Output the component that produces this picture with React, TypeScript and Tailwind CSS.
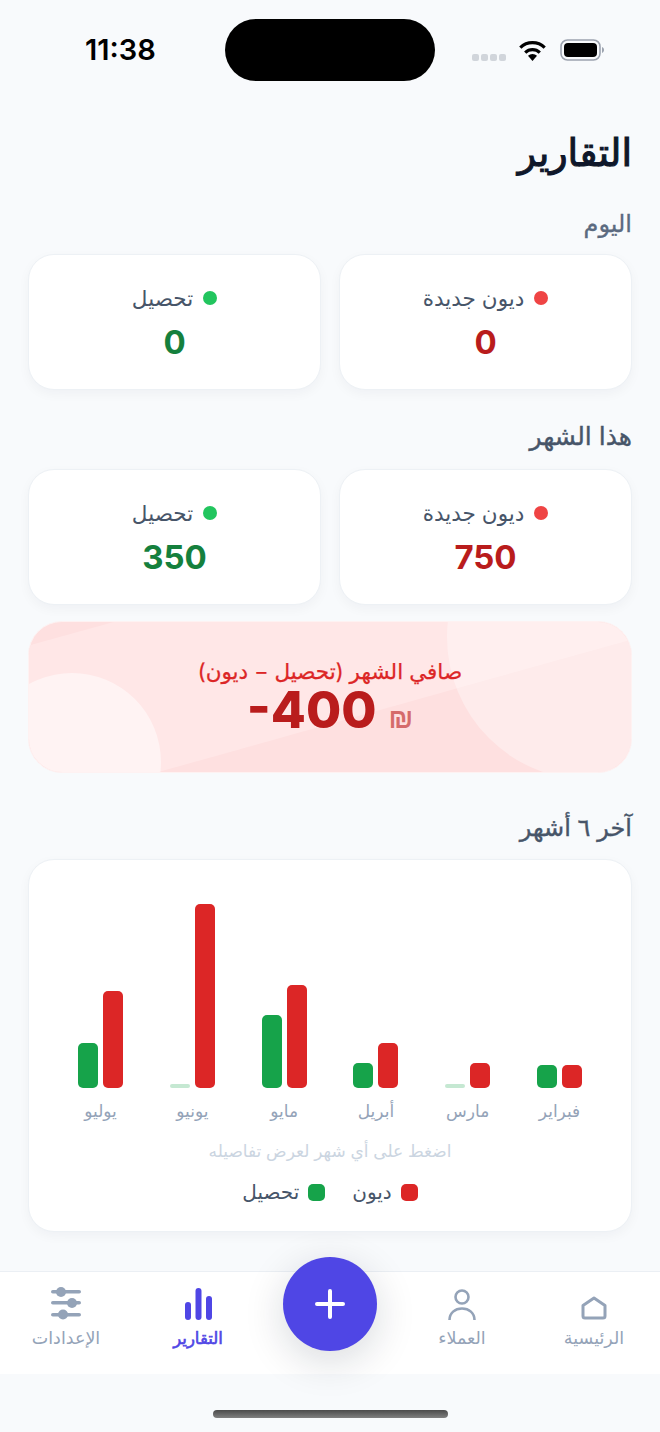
import React from "react";

const FONT = { fontFamily: "Inter, 'Noto Sans', 'DejaVu Sans', sans-serif" };

function Stat({ label, value, dot, color }: { label: string; value: string; dot: string; color: string }) {
  return (
    <div className="flex h-[136px] flex-col items-center rounded-[26px] border border-[#edf1f5] bg-white pt-[29px] shadow-[0_4px_12px_rgba(15,23,42,0.04)]">
      <div className="flex items-center gap-[10px] text-[21.5px] leading-[28px] text-[#475569]">
        <span className={`h-[14px] w-[14px] rounded-full ${dot}`} />
        <span>{label}</span>
      </div>
      <div className={`mt-[8px] text-[33px] font-bold leading-[44px] ${color}`}>{value}</div>
    </div>
  );
}

const months = [
  { name: "فبراير", g: 23, r: 23 },
  { name: "مارس", g: 4, r: 25 },
  { name: "أبريل", g: 25, r: 45 },
  { name: "مايو", g: 73, r: 103 },
  { name: "يونيو", g: 4, r: 184 },
  { name: "يوليو", g: 45, r: 97 },
];

function Bars() {
  return (
    <div className="flex justify-between px-[36.5px]">
      {months.map((m) => (
        <div key={m.name} className="flex w-[70px] flex-col items-center">
          <div className="flex h-[184px] items-end gap-[5px]">
            <div className="w-[20px] rounded-[5px] bg-[#dc2626]" style={{ height: m.r }} />
            <div
              className={`w-[20px] ${m.g < 10 ? "rounded-[2px] bg-[#16a34a]/25" : "rounded-[5px] bg-[#16a34a]"}`}
              style={{ height: m.g }}
            />
          </div>
          <div className="mt-[10px] text-[17px] leading-[26px] text-[#94a3b8]">{m.name}</div>
        </div>
      ))}
    </div>
  );
}

function NavItem({ label, active, children }: { label: string; active?: boolean; children: React.ReactNode }) {
  return (
    <div className={`flex flex-col items-center ${active ? "text-[#4f46e5]" : "text-[#94a3b8]"}`}>
      <div className="flex h-[34px] items-end">{children}</div>
      <div className={`mt-[5px] leading-[26px] ${active ? "text-[16.5px] [-webkit-text-stroke:0.6px]" : "text-[17.5px]"}`}>{label}</div>
    </div>
  );
}

export default function App() {
  return (
    <div dir="rtl" style={FONT} className="flex h-[1432px] w-[660px] flex-col overflow-hidden bg-[#f8fafc]">
      <div dir="ltr" className="relative flex h-[100px] items-start justify-between pl-[85px] pr-[56px] pt-[19px] text-black">
        <div className="mt-[12px] text-[29px] font-semibold leading-[38px]">11:38</div>
        <div className="absolute left-[225px] top-[19px] h-[62px] w-[210px] rounded-full bg-black" />
        <div className="mt-[20px] flex items-center">
          <div className="mr-[12px] mt-[14px] flex gap-[2px]">
            <span className="h-[7px] w-[7px] rounded-[2px] bg-[#d1d5db]" />
            <span className="h-[7px] w-[7px] rounded-[2px] bg-[#d1d5db]" />
            <span className="h-[7px] w-[7px] rounded-[2px] bg-[#d1d5db]" />
            <span className="h-[7px] w-[7px] rounded-[2px] bg-[#d1d5db]" />
          </div>
          <svg width="29" height="21" viewBox="0 0 29 21" className="mr-[13px]">
            <path d="M14.5 21 10 15.8a6.6 6.6 0 0 1 9 0Z" fill="#000" />
            <path d="M7.2 12.6a10.6 10.6 0 0 1 14.6 0" stroke="#000" strokeWidth="3.2" fill="none" />
            <path d="M2.3 7.6a17.6 17.6 0 0 1 24.4 0" stroke="#000" strokeWidth="3.2" fill="none" />
          </svg>
          <svg width="44" height="22" viewBox="0 0 44 22">
            <rect x="1" y="1" width="39" height="20" rx="6.5" fill="none" stroke="#9ca3af" strokeWidth="1.6" />
            <rect x="4" y="4" width="33" height="14" rx="4" fill="#000" />
            <path d="M42 8v6c1.2-.4 2-1.6 2-3s-.8-2.6-2-3Z" fill="#9ca3af" />
          </svg>
        </div>
      </div>

      <div className="flex-1 px-[28px]">
        <h1 className="mt-[26px] text-[38px] font-normal leading-[52px] text-[#0f172a] [-webkit-text-stroke:1.1px]">التقارير</h1>
        <h2 className="mt-[31px] text-[24px] font-normal leading-[30px] text-[#5b6a80] [-webkit-text-stroke:0.3px]">اليوم</h2>
        <div className="mt-[15px] grid grid-cols-2 gap-[18px]">
          <Stat label="ديون جديدة" value="0" dot="bg-[#ef4444]" color="text-[#b91c1c]" />
          <Stat label="تحصيل" value="0" dot="bg-[#22c55e]" color="text-[#15803d]" />
        </div>
        <h2 className="mt-[31px] text-[25px] font-normal leading-[30px] text-[#475569] [-webkit-text-stroke:0.4px]">هذا الشهر</h2>
        <div className="mt-[18px] grid grid-cols-2 gap-[18px]">
          <Stat label="ديون جديدة" value="750" dot="bg-[#ef4444]" color="text-[#b91c1c]" />
          <Stat label="تحصيل" value="350" dot="bg-[#22c55e]" color="text-[#15803d]" />
        </div>

        <div className="relative mt-[16px] h-[152px] overflow-hidden rounded-[34px] border border-red-50 bg-[#fee0e0]">
          <svg className="absolute inset-0 h-full w-full" viewBox="0 0 604 153" preserveAspectRatio="none">
            <polygon points="0,24 85,0 604,0 604,18 130,153 0,153" fill="#ffe7e7" />
          </svg>
          <div className="absolute left-[-46px] top-[51px] h-[178px] w-[178px] rounded-full bg-white/50" />
          <div className="absolute left-[418px] top-[-128px] h-[286px] w-[286px] rounded-full bg-white/35" />
          <div className="relative flex flex-col items-center pt-[34px]">
            <div className="text-[21.5px] leading-[30px] text-[#dc2626] [-webkit-text-stroke:0.25px]">صافي الشهر (تحصيل − ديون)</div>
            <div className="flex items-baseline gap-[12px] leading-[48px]">
              <span className="text-[28px] font-bold text-[#b91c1c]/60" style={{ fontFamily: "'Liberation Sans', sans-serif" }}>₪</span>
              <span dir="ltr" className="text-[51px] font-extrabold text-[#b91c1c]">-400</span>
            </div>
          </div>
        </div>

        <h2 className="mt-[40px] text-[24px] font-normal leading-[30px] text-[#475569] [-webkit-text-stroke:0.4px]">آخر ٦ أشهر</h2>
        <div className="mt-[16px] h-[373px] rounded-[26px] border border-[#edf1f5] bg-white pt-[44px] shadow-[0_4px_12px_rgba(15,23,42,0.04)]">
          <Bars />
          <div className="mt-[14px] text-center text-[17px] leading-[26px] text-[#cbd5e1]">اضغط على أي شهر لعرض تفاصيله</div>
          <div className="mt-[15px] flex items-center justify-center gap-[27px] text-[20px] leading-[26px] text-[#475569]">
            <div className="flex items-center gap-[9px]">
              <span className="h-[17px] w-[17px] rounded-[5px] bg-[#dc2626]" />
              <span>ديون</span>
            </div>
            <div className="flex items-center gap-[9px]">
              <span className="h-[17px] w-[17px] rounded-[5px] bg-[#16a34a]" />
              <span>تحصيل</span>
            </div>
          </div>
        </div>
      </div>

      <div className="relative h-[103px] border-t border-slate-200/70 bg-white pt-[14px]">
        <div className="grid grid-cols-5">
          <NavItem label="الرئيسية">
            <svg width="26" height="24" viewBox="0 0 26 24" fill="none" stroke="currentColor" strokeWidth="3" strokeLinejoin="round">
              <path d="M13 2 2 9.500V20a2 2 0 0 0 2 2h18a2 2 0 0 0 2-2V9.500Z" />
            </svg>
          </NavItem>
          <NavItem label="العملاء">
            <svg width="28" height="31" viewBox="0 0 28 31" fill="none" stroke="currentColor" strokeWidth="2.600">
              <circle cx="14" cy="8" r="6.500" />
              <path d="M1.500 31c0-7 5.500-11.500 12.500-11.500S26.500 24 26.500 31" />
            </svg>
          </NavItem>
          <div />
          <NavItem label="التقارير" active>
            <svg width="27" height="32" viewBox="0 0 27 32" fill="currentColor">
              <rect x="0" y="14" width="6" height="18" rx="3" />
              <rect x="10.500" y="0" width="6" height="32" rx="3" />
              <rect x="21" y="8" width="6" height="24" rx="3" />
            </svg>
          </NavItem>
          <NavItem label="الإعدادات">
            <svg width="30" height="33" viewBox="0 0 30 33" fill="#94a3b8">
              <rect x="0" y="3" width="30" height="3.600" rx="1.800" />
              <rect x="0" y="14" width="30" height="3.600" rx="1.800" />
              <rect x="0" y="26" width="30" height="3.600" rx="1.800" />
              <circle cx="10" cy="5" r="5" />
              <circle cx="21" cy="16" r="5" />
              <circle cx="12" cy="27.500" r="5" />
            </svg>
          </NavItem>
        </div>
        <div className="absolute left-[283px] top-[-15px] flex h-[94px] w-[94px] items-center justify-center rounded-full bg-[#4f46e5] shadow-[0_10px_40px_rgba(15,23,42,0.16)]">
          <svg width="32" height="32" viewBox="0 0 32 32" stroke="#fff" strokeWidth="4" strokeLinecap="round">
            <path d="M16 3v26M3 16h26" />
          </svg>
        </div>
      </div>

      <div className="flex h-[58px] justify-center pt-[36px]">
        <div className="h-[8px] w-[235px] rounded-full bg-linear-to-b from-[#4b4b4b] to-[#808080]" />
      </div>
    </div>
  );
}
